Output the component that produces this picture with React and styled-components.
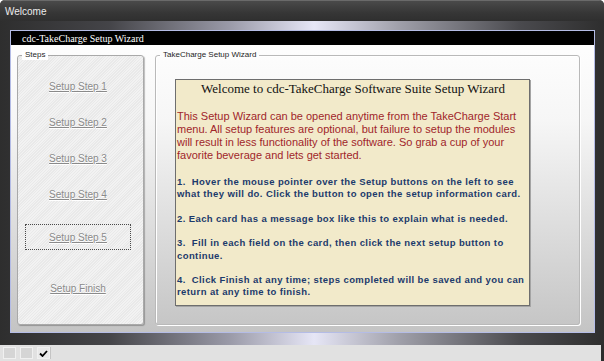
import React from 'react';
import styled, { createGlobalStyle, css } from 'styled-components';

const GlobalStyle = createGlobalStyle`
  html, body {
    margin: 0;
    padding: 0;
    background: #ffffff;
  }
  body {
    font-family: "Liberation Sans", Arial, sans-serif;
  }
`;

const Window = styled.div`
  width: 604px;
  height: 361px;
  display: flex;
  flex-direction: column;
  background: #2c2c2c;
  border-radius: 5px 5px 0 0;
  overflow: hidden;
`;

const TitleBar = styled.div`
  flex: none;
  height: 21px;
  box-sizing: border-box;
  display: flex;
  align-items: center;
  padding-left: 5px;
  border-top: 1px solid #6a6a6a;
  background: linear-gradient(#4a4a4a, #363636 60%, #2f2f2f);
  color: #ececec;
  font-size: 10px;
`;

const Body = styled.div`
  flex: 1;
  display: flex;
  padding: 9px 9px 12px 10px;
  background: linear-gradient(
    to right,
    #2e2e2e 0%,
    #444448 18%,
    #9a9aa8 38%,
    #e6e6f6 52%,
    #a0a0aa 66%,
    #4a4a4e 86%,
    #2e2e2e 100%
  );
`;

const Panel = styled.div`
  flex: 1;
  display: flex;
  flex-direction: column;
  border: 1px solid #b4bce6;
  background: linear-gradient(#ffffff, #f6f6f6 30%, #c4c4c4);
`;

const PanelHeader = styled.div`
  flex: none;
  height: 14px;
  display: flex;
  align-items: center;
  padding-left: 11px;
  background: #000000;
  color: #ffffff;
  font-family: "Liberation Serif", "Times New Roman", serif;
  font-size: 10px;
`;

const PanelContent = styled.div`
  flex: 1;
  display: flex;
  gap: 11px;
  padding: 5px 14px 7px 6px;
`;

const Group = styled.fieldset`
  margin: 0;
  min-width: 0;
  box-sizing: border-box;
  border: 1px solid #a9a9a9;
  border-radius: 3px;
  ${p => p.$steps ? css`
    width: 127px;
    flex: none;
    padding: 13px 0 0 7px;
    background: repeating-linear-gradient(-45deg, #f2f2f2 0 1px, #e9e9e9 1px 2px);
    box-shadow: 1px 1px 1px rgba(0, 0, 0, 0.25);
  ` : css`
    flex: 1;
    padding: 19px 0 0 19px;
    border-color: #b9b9b9;
    box-shadow: inset 1px 1px 0 #ffffff, 1px 1px 0 #ffffff;
  `}
`;

const Legend = styled.legend`
  margin-left: ${p => p.$offset}px;
  padding: 0 3px;
  font-size: 8px;
  line-height: 10px;
  color: #1e1e1e;
  background: ${p => p.$bg || 'transparent'};
`;

const StepList = styled.div`
  display: flex;
  flex-direction: column;
  align-items: flex-start;
`;

const StepButton = styled.a`
  width: 106px;
  height: 26px;
  margin-top: ${p => p.$gap}px;
  box-sizing: border-box;
  display: flex;
  align-items: center;
  justify-content: center;
  font-size: 10px;
  color: #8a8a8a;
  text-decoration: underline;
  text-shadow: 0 1px 0 #ffffff;
  border: 1px dotted ${p => (p.$focused ? '#4a4a4a' : 'transparent')};
  cursor: pointer;
`;

const MessageBox = styled.div`
  width: 355px;
  height: 227px;
  box-sizing: border-box;
  padding: 1px 0 0 1px;
  background: #f2eaca;
  border: 1px solid #6e6e6e;
  box-shadow: 1px 1px 0 #a4a4a4;
`;

const Heading = styled.div`
  text-align: center;
  font-family: "Liberation Serif", "Times New Roman", serif;
  font-size: 13px;
  line-height: 16px;
  color: #111111;
  margin-bottom: 13px;
`;

const Intro = styled.p`
  margin: 0 0 14px;
  font-size: 11px;
  line-height: 13px;
  color: #a0262a;
`;

const Tip = styled.p`
  margin: 0 0 12px;
  font-size: 9.5px;
  font-weight: bold;
  letter-spacing: 0.4px;
  line-height: 12.4px;
  color: #1c3a6c;
  white-space: pre-wrap;
`;

const StatusBar = styled.div`
  flex: none;
  height: 16px;
  margin-right: 3px;
  display: flex;
  align-items: center;
  gap: 4px;
  padding-left: 3px;
  background: #e1e1e1;
`;

const StatusCell = styled.div`
  width: 13px;
  height: 12px;
  box-sizing: border-box;
  display: flex;
  align-items: center;
  justify-content: center;
  border: 1px solid #f0f0f0;
  background: ${p => (p.$checked ? '#e9e9e9' : '#d5d5d5')};
  ${p => p.$checked && css`
    box-shadow: 1px 0 0 #c4c4c4;
  `}
`;

const steps = [
  { label: 'Setup Step 1', gap: 0 },
  { label: 'Setup Step 2', gap: 10 },
  { label: 'Setup Step 3', gap: 10 },
  { label: 'Setup Step 4', gap: 10 },
  { label: 'Setup Step 5', gap: 17, focused: true },
  { label: 'Setup Finish', gap: 25 },
];

const tips = [
  '1.  Hover the mouse pointer over the Setup buttons on the left to see what they will do. Click the button to open the setup information card.',
  '2. Each card has a message box like this to explain what is needed.',
  '3.  Fill in each field on the card, then click the next setup button to continue.',
  '4.  Click Finish at any time; steps completed will be saved and you can return at any time to finish.',
];

export default function App() {
  return (
    <>
      <GlobalStyle />
      <Window>
        <TitleBar>Welcome</TitleBar>
        <Body>
          <Panel>
            <PanelHeader>cdc-TakeCharge Setup Wizard</PanelHeader>
            <PanelContent>
              <Group $steps>
                <Legend $bg="#ffffff" $offset={-3}>Steps</Legend>
                <StepList>
                  {steps.map(s => (
                    <StepButton key={s.label} $gap={s.gap} $focused={s.focused}>
                      {s.label}
                    </StepButton>
                  ))}
                </StepList>
              </Group>
              <Group>
                <Legend $offset={-15}>TakeCharge Setup Wizard</Legend>
                <MessageBox>
                  <Heading>Welcome to cdc-TakeCharge Software Suite Setup Wizard</Heading>
                  <Intro>
                    This Setup Wizard can be opened anytime from the TakeCharge Start menu. All setup
                    features are optional, but failure to setup the modules will result in less
                    functionality of the software. So grab a cup of your favorite beverage and lets get
                    started.
                  </Intro>
                  {tips.map(t => (
                    <Tip key={t}>{t}</Tip>
                  ))}
                </MessageBox>
              </Group>
            </PanelContent>
          </Panel>
        </Body>
        <StatusBar>
          <StatusCell />
          <StatusCell />
          <StatusCell $checked>
            <svg width="9" height="7" viewBox="0 0 9 7">
              <path d="M1 3.5 L3.5 6 L8 1" fill="none" stroke="#000" strokeWidth="1.8" />
            </svg>
          </StatusCell>
        </StatusBar>
      </Window>
    </>
  );
}
